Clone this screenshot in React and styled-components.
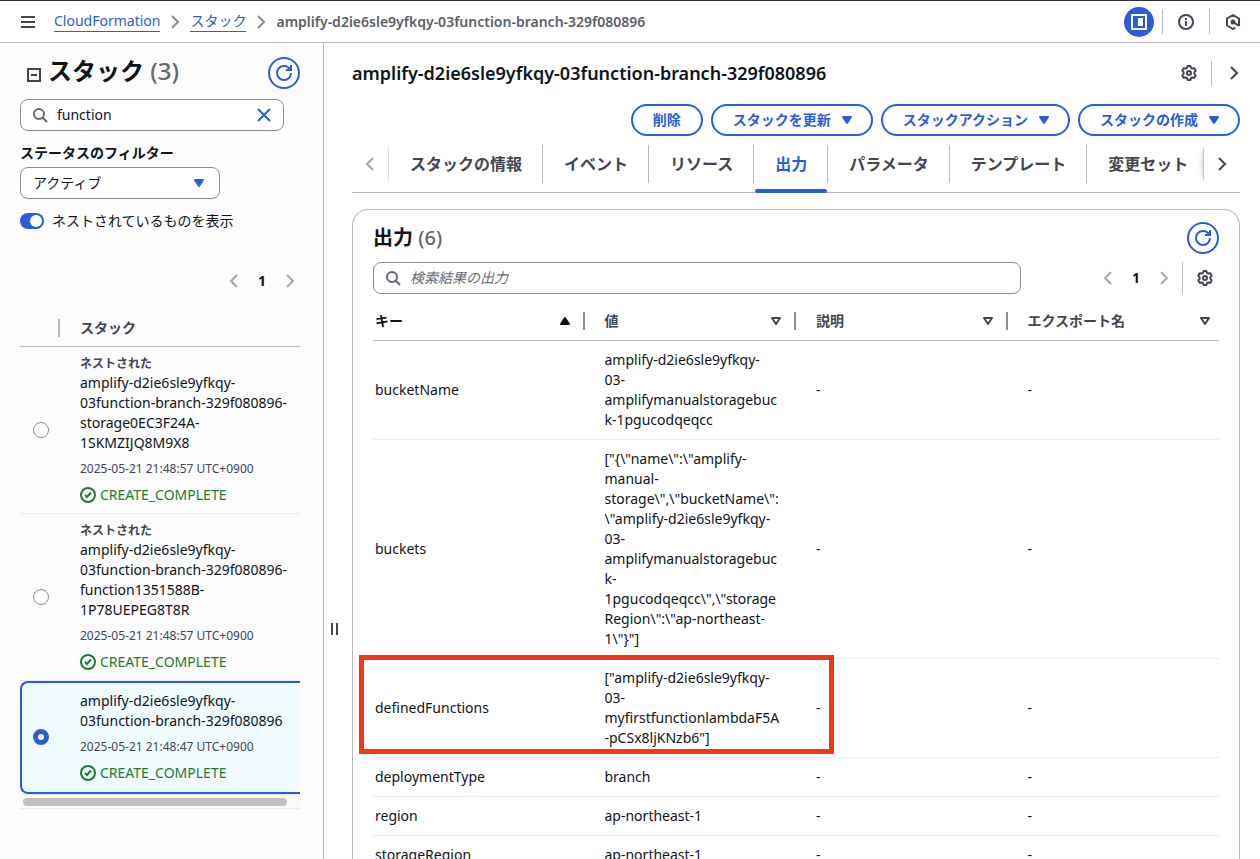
import React, { useState } from 'react';
import styled, { createGlobalStyle, css } from 'styled-components';

const GlobalStyle = createGlobalStyle`
    * {
        box-sizing: border-box;
    }

    html, body {
        height: 100%;
        margin: 0;
        overflow: hidden;
    }

    #root {
        height: 100%;
    }

    body, button, input, select {
        font-family: "Noto Sans", "Noto Sans CJK JP", sans-serif;
        font-size: 14px;
        line-height: 20px;
        color: #0f141a;
    }
`;

const Page = styled.div`
    display: flex;
    flex-direction: column;
    height: 100vh;
    background: #fff;
    border-top: 1px solid #2c2f3a;
`;

const TopBar = styled.header`
    display: flex;
    align-items: center;
    flex: none;
    height: 42px;
    padding: 0 19px 0 20px;
    border-bottom: 1px solid #b6b9c4;
`;

const IconButton = styled.button`
    display: inline-flex;
    align-items: center;
    justify-content: center;
    flex: none;
    width: 16px;
    height: 32px;
    padding: 0;
    border: 0;
    background: none;
    color: ${({ $muted }) => ($muted ? '#a4a7b2' : '#424650')};
    cursor: pointer;
`;

const Svg = styled.svg`
    display: block;
    flex: none;
    fill: none;
    stroke: currentColor;
    stroke-width: 2;
`;

const Breadcrumbs = styled.nav`
    display: flex;
    align-items: center;
    gap: 7px;
    flex: 1;
    margin-left: 18px;
    color: #8c8c94;
`;

const Crumb = styled.a`
    color: #2a5ddb;
    text-decoration: none;
    border-bottom: 1px solid #2a5ddb;
`;

const CurrentCrumb = styled.span`
    color: #5c5f69;
    font-weight: 600;
`;

const TopTools = styled.div`
    display: flex;
    align-items: center;
    gap: 15px;
`;

const Divider = styled.span`
    width: 1px;
    height: 25px;
    background: #b6b9c4;
`;

const PanelToggle = styled.button`
    display: flex;
    align-items: center;
    justify-content: center;
    width: 30px;
    height: 30px;
    margin-right: -7px;
    padding: 0;
    border: 0;
    border-radius: 50%;
    background: #2a5ddb;
    color: #fff;
`;

const Body = styled.div`
    display: flex;
    flex: 1;
    min-height: 0;
`;

const Sidebar = styled.aside`
    flex: none;
    width: 324px;
    padding: 14px 23px 0 20px;
    background: #fcfcfd;
    border-right: 1px solid #b6b9c4;
    overflow: hidden;
`;

const SideHeader = styled.div`
    display: flex;
    align-items: center;
    justify-content: space-between;
    height: 32px;
    padding-left: 7px;
`;

const SideTitle = styled.h2`
    display: flex;
    align-items: center;
    gap: 7px;
    margin: -4px 0 0;
    font-size: 24px;
    line-height: 30px;
    font-weight: 600;

    svg {
        margin-top: 8px;
        color: #424650;
    }
`;

const Count = styled.span`
    color: #656871;
    font-weight: 500;
`;

const RoundButton = styled.button`
    display: flex;
    align-items: center;
    justify-content: center;
    flex: none;
    width: 32px;
    height: 32px;
    padding: 0;
    border: 2px solid #2a5ddb;
    border-radius: 50%;
    background: #fff;
    color: #2a5ddb;
`;

const SearchBox = styled.label`
    display: flex;
    align-items: center;
    gap: 9px;
    height: 32px;
    padding: 0 11px;
    border: 1px solid #8c8c94;
    border-radius: 8px;
    background: #fff;
    color: #656871;

    input {
        flex: 1;
        min-width: 0;
        padding: 0;
        border: 0;
        outline: 0;
        background: none;
    }

    input::placeholder {
        color: #656871;
        font-style: italic;
        opacity: 1;
    }
`;

const SideSearch = styled(SearchBox)`
    margin: 10px 16px 0 0;
`;

const ClearButton = styled(IconButton)`
    color: #2a5ddb;
`;

const FieldLabel = styled.label`
    display: block;
    margin: 12px 0 4px;
    font-size: 14px;
    font-weight: 600;
`;

const SelectWrap = styled.div`
    display: grid;
    align-items: center;
    width: 200px;

    > * {
        grid-area: 1 / 1;
    }

    svg {
        justify-self: end;
        margin-right: 15px;
        color: #2a5ddb;
        pointer-events: none;
    }
`;

const Select = styled.select`
    width: 100%;
    height: 32px;
    padding: 0 12px;
    border: 1px solid #8c8c94;
    border-radius: 8px;
    background: #fff;
    appearance: none;
`;

const ToggleLabel = styled.label`
    display: flex;
    align-items: center;
    gap: 8px;
    margin-top: 12px;
`;

const Toggle = styled.input`
    display: flex;
    align-items: center;
    width: 24px;
    height: 16px;
    margin: 0;
    padding: 0 2px;
    border-radius: 8px;
    background: ${({ checked }) => (checked ? '#2a5ddb' : '#424650')};
    appearance: none;

    &::before {
        content: "";
        width: 12px;
        height: 12px;
        margin-left: ${({ checked }) => (checked ? 'auto' : 0)};
        border-radius: 50%;
        background: #fff;
    }
`;

const Pager = styled.div`
    display: flex;
    align-items: center;
    gap: 16px;
    font-weight: 700;
`;

const SidePager = styled(Pager)`
    justify-content: flex-end;
    margin: 34px 2px 15px 0;
`;

const StackTable = styled.table`
    width: 100%;
    border-collapse: separate;
    border-spacing: 0;

    th {
        height: 35px;
        padding: 0 0 3px;
        text-align: left;
        border-bottom: 1px solid #b6b9c4;
        color: #424650;
        font-weight: 600;
    }

    th:first-child > span {
        display: block;
        width: 2px;
        height: 18px;
        margin-left: 38px;
        background: #b6b9c4;
    }
`;

const StackCell = styled.td`
    padding: ${({ $selected }) => ($selected ? '8px 0 9px' : '8px 0')};
    border-bottom: 1px solid #ebebf0;
    word-break: break-word;

    &:first-child {
        width: 60px;
        padding-left: 13px;
    }

    ${({ $selected }) => $selected && css`
        background: #f0fbff;
        border-top: 2px solid #2a5ddb;
        border-bottom: 2px solid #2a5ddb;

        &:first-child {
            padding-left: 11px;
            border-left: 2px solid #2a5ddb;
            border-radius: 8px 0 0 8px;
        }
    `}
`;

const Radio = styled.input`
    display: block;
    width: 16px;
    height: 16px;
    margin: 0;
    border: ${({ checked }) => (checked ? '5px solid #2a5ddb' : '1px solid #8c8c94')};
    border-radius: 50%;
    background: #fff;
    appearance: none;
`;

const Nested = styled.div`
    color: #424650;
    font-size: 12px;
    line-height: 18px;
    font-weight: 600;
`;

const StackName = styled.div`
    white-space: pre;
`;

const StackTime = styled.div`
    margin-top: 7px;
    color: #424650;
    font-size: 12px;
    line-height: 18px;
`;

const Status = styled.div`
    display: flex;
    align-items: center;
    gap: 4px;
    margin-top: 7px;
    color: #1f7a2e;
`;

const ScrollTrack = styled.div`
    height: 15px;
    padding: 3px 13px 0 3px;
    border-top: 1px solid #ebebeb;
    border-bottom: 1px solid #ebebeb;
    background: #fafafa;
`;

const ScrollThumb = styled.div`
    height: 8px;
    border-radius: 4px;
    background: #c1c1c1;
`;

const Splitter = styled.div`
    display: flex;
    align-items: center;
    justify-content: center;
    gap: 3px;
    flex: none;
    width: 28px;
    padding: 0 7px 0 0;

    &::before, &::after {
        content: "";
        width: 2px;
        height: 12px;
        margin-top: 356px;
        background: #424650;
    }
`;

const Main = styled.main`
    display: flex;
    flex-direction: column;
    flex: 1;
    min-width: 0;
    padding: 14px 20px 0 0;
`;

const MainHeader = styled.div`
    display: flex;
    align-items: center;
    justify-content: space-between;
    flex: none;
    height: 32px;
`;

const MainTitle = styled.h1`
    margin: 0;
    font-size: 18px;
    line-height: 22px;
    font-weight: 600;
`;

const HeaderTools = styled.div`
    display: flex;
    align-items: center;
    gap: 14px;

    ${IconButton}:last-child {
        margin-right: -2px;
    }
`;

const Actions = styled.div`
    display: flex;
    justify-content: flex-end;
    flex: none;
    gap: 8px;
    margin-top: 15px;
`;

const ActionButton = styled.button`
    display: flex;
    align-items: center;
    gap: 10px;
    height: 32px;
    padding: 0 20px;
    border: 2px solid #2a5ddb;
    border-radius: 20px;
    background: #fff;
    color: #2a5ddb;
    font-weight: 600;
    white-space: nowrap;

    svg {
        margin-right: -2px;
    }
`;

const TabBar = styled.div`
    display: flex;
    align-items: center;
    flex: none;
    height: 57px;
    border-bottom: 1px solid #b6b9c4;
`;

const TabArrow = styled(IconButton)`
    width: 37px;
    border-right: ${({ $left }) => ($left ? '1px solid #dedee3' : 0)};
    border-left: ${({ $left }) => ($left ? 0 : '1px solid #c6c6cd')};
    box-shadow: ${({ $left }) => ($left ? 'none' : '-4px 0 4px -3px rgba(0, 7, 22, 0.2)')};
`;

const Tabs = styled.div`
    display: flex;
    align-items: stretch;
    flex: 1;
    height: 57px;
    overflow: hidden;
`;

const Tab = styled.button`
    display: grid;
    grid-template-rows: 9px 38px 10px;
    flex: none;
    padding: 0;
    border: 0;
    background: none;
    color: ${({ $active }) => ($active ? '#2a5ddb' : '#424650')};
    font-size: 16px;
    font-weight: 600;

    span {
        grid-row: 2;
        padding: 9px 20px 9px 21px;
        border-right: ${({ $last }) => ($last ? 0 : '1px solid #b6b9c4')};
    }

    &::after {
        content: "";
        grid-row: 3;
        align-self: end;
        height: 4px;
        margin: 0 1px;
        border-radius: 2px;
        background: ${({ $active }) => ($active ? '#2a5ddb' : 'transparent')};
    }
`;

const Card = styled.section`
    flex: 1;
    min-height: 0;
    margin-top: 16px;
    padding: 12px 20px 0;
    border: 1px solid #b6b9c4;
    border-bottom: 0;
    border-radius: 16px 16px 0 0;
    overflow: hidden;
`;

const CardHeader = styled.div`
    display: flex;
    align-items: center;
    justify-content: space-between;
`;

const CardTitle = styled.h2`
    margin: 0;
    font-size: 20px;
    line-height: 24px;
    font-weight: 600;
`;

const CardTools = styled.div`
    display: flex;
    align-items: center;
    justify-content: space-between;
    margin-top: 8px;
`;

const OutputSearch = styled(SearchBox)`
    flex: 0 1 648px;
`;

const PagerGroup = styled.div`
    display: flex;
    align-items: center;
    padding-right: 6px;
`;

const PagerDivider = styled(Divider)`
    height: 32px;
    margin: 0 14px 0 10px;
`;

const OutputTable = styled.table`
    width: 100%;
    table-layout: fixed;
    border-collapse: separate;
    border-spacing: 0;

    th {
        height: 47px;
        padding: 8px 0 0;
        border-bottom: 1px solid #b6b9c4;
        font-weight: 600;
        text-align: left;
    }

    td {
        padding: 9px 0 9px 20px;
        border-bottom: 1px solid #ebebf0;
        vertical-align: middle;
        white-space: pre-line;
    }

    td:first-child {
        padding-left: 2px;
    }
`;

const HeadCell = styled.div`
    display: flex;
    align-items: center;
    justify-content: space-between;
    height: 18px;
    padding: 0 ${({ $last }) => ($last ? 8 : 12)}px 0 ${({ $first }) => ($first ? 2 : 20)}px;
    border-right: ${({ $last }) => ($last ? 0 : '2px solid #8c8c94')};
    color: ${({ $first }) => ($first ? '#0f141a' : '#424650')};
`;

const OutputRow = styled.tr`
    position: relative;
`;

const Highlight = styled.span`
    position: absolute;
    left: -14px;
    top: -4px;
    width: 475px;
    height: 99px;
    border: 5px solid #ee3a1b;
    pointer-events: none;
`;

function Chevron({ left }) {
    return (
        <Svg width="16" height="16" viewBox="0 0 16 16">
            <path d={left ? 'M11 2 5 8l6 6' : 'm5 2 6 6-6 6'} />
        </Svg>
    );
}

function SearchIcon() {
    return (
        <Svg width="16" height="16" viewBox="0 0 16 16">
            <circle cx="7" cy="7" r="5" />
            <path d="m15 15-4.5-4.5" />
        </Svg>
    );
}

function RefreshIcon() {
    return (
        <Svg width="16" height="16" viewBox="0 0 16 16">
            <path d="M10 5h5V0" />
            <path d="M15 8a6.957 6.957 0 0 1-7 7 6.957 6.957 0 0 1-7-7 6.957 6.957 0 0 1 7-7 6.87 6.87 0 0 1 6.3 4" />
        </Svg>
    );
}

function GearIcon() {
    return (
        <Svg width="16" height="16" viewBox="0 0 16 16" strokeLinejoin="round">
            <path d="M6.6 1h2.8l.6 1.9 1.3.7 2-.4 1.4 2.4-1.3 1.5v1.8l1.3 1.5-1.4 2.4-2-.4-1.3.7-.6 1.9H6.6L6 13.1l-1.3-.7-2 .4-1.4-2.4 1.3-1.5V7.1L1.3 5.6l1.4-2.4 2 .4L6 2.9z" />
            <circle cx="8" cy="8" r="2" />
        </Svg>
    );
}

function Caret({ up, open }) {
    return (
        <Svg width="12" height="10" viewBox="0 0 12 10" strokeLinejoin="round">
            <path
                d={up ? 'M2 8h8L6 2z' : 'M2 2h8L6 8z'}
                fill={open ? 'none' : 'currentColor'}
            />
        </Svg>
    );
}

function CheckIcon() {
    return (
        <Svg width="16" height="16" viewBox="0 0 16 16">
            <circle cx="8" cy="8" r="7" />
            <path d="m5 8 2 2 4-4.5" />
        </Svg>
    );
}

function PageButtons() {
    return (
        <>
            <IconButton $muted aria-label="前へ"><Chevron left /></IconButton>
            <span>1</span>
            <IconButton $muted aria-label="次へ"><Chevron /></IconButton>
        </>
    );
}

const stacks = [
    {
        id: 'storage',
        nested: true,
        name: 'amplify-d2ie6sle9yfkqy-\n03function-branch-329f080896-\nstorage0EC3F24A-\n1SKMZIJQ8M9X8',
        time: '2025-05-21 21:48:57 UTC+0900',
    },
    {
        id: 'function',
        nested: true,
        name: 'amplify-d2ie6sle9yfkqy-\n03function-branch-329f080896-\nfunction1351588B-\n1P78UEPEG8T8R',
        time: '2025-05-21 21:48:57 UTC+0900',
    },
    {
        id: 'root',
        name: 'amplify-d2ie6sle9yfkqy-\n03function-branch-329f080896',
        time: '2025-05-21 21:48:47 UTC+0900',
    },
];

const tabs = ['スタックの情報', 'イベント', 'リソース', '出力', 'パラメータ', 'テンプレート', '変更セット'];

const columns = ['キー', '値', '説明', 'エクスポート名'];

const outputs = [
    ['bucketName', 'amplify-d2ie6sle9yfkqy-\n03-\namplifymanualstoragebuc\nk-1pgucodqeqcc'],
    ['buckets', '["{\\"name\\":\\"amplify-\nmanual-\nstorage\\",\\"bucketName\\":\n\\"amplify-d2ie6sle9yfkqy-\n03-\namplifymanualstoragebuc\nk-\n1pgucodqeqcc\\",\\"storage\nRegion\\":\\"ap-northeast-\n1\\"}"]'],
    ['definedFunctions', '["amplify-d2ie6sle9yfkqy-\n03-\nmyfirstfunctionlambdaF5A\n-pCSx8ljKNzb6"]'],
    ['deploymentType', 'branch'],
    ['region', 'ap-northeast-1'],
    ['storageRegion', 'ap-northeast-1'],
];

function StackList() {
    const [query, setQuery] = useState('function');
    const [nested, setNested] = useState(true);
    const [selected, setSelected] = useState('root');

    return (
        <Sidebar>
            <SideHeader>
                <SideTitle>
                    <Svg width="14" height="14" viewBox="0 0 14 14">
                        <path d="M1 1h12v12H1zM4 7h6" />
                    </Svg>
                    <span>スタック <Count>(3)</Count></span>
                </SideTitle>
                <RoundButton aria-label="更新"><RefreshIcon /></RoundButton>
            </SideHeader>
            <SideSearch>
                <SearchIcon />
                <input aria-label="検索" value={query} onChange={(e) => setQuery(e.target.value)} />
                <ClearButton aria-label="クリア" onClick={() => setQuery('')}>
                    <Svg width="16" height="16" viewBox="0 0 16 16">
                        <path d="m2 2 12 12M14 2 2 14" />
                    </Svg>
                </ClearButton>
            </SideSearch>
            <FieldLabel htmlFor="status">ステータスのフィルター</FieldLabel>
            <SelectWrap>
                <Select id="status">
                    <option>アクティブ</option>
                </Select>
                <Caret />
            </SelectWrap>
            <ToggleLabel>
                <Toggle type="checkbox" role="switch" checked={nested} onChange={() => setNested(!nested)} />
                ネストされているものを表示
            </ToggleLabel>
            <SidePager><PageButtons /></SidePager>
            <StackTable>
                <thead>
                    <tr>
                        <th><span /></th>
                        <th>スタック</th>
                    </tr>
                </thead>
                <tbody>
                    {stacks.map((stack) => (
                        <tr key={stack.id}>
                            <StackCell $selected={selected === stack.id}>
                                <Radio
                                    type="radio"
                                    name="stack"
                                    aria-label={stack.name}
                                    checked={selected === stack.id}
                                    onChange={() => setSelected(stack.id)}
                                />
                            </StackCell>
                            <StackCell $selected={selected === stack.id}>
                                {stack.nested && <Nested>ネストされた</Nested>}
                                <StackName>{stack.name}</StackName>
                                <StackTime>{stack.time}</StackTime>
                                <Status><CheckIcon />CREATE_COMPLETE</Status>
                            </StackCell>
                        </tr>
                    ))}
                </tbody>
            </StackTable>
            <ScrollTrack><ScrollThumb /></ScrollTrack>
        </Sidebar>
    );
}

function Outputs() {
    return (
        <Card>
            <CardHeader>
                <CardTitle>出力 <Count>(6)</Count></CardTitle>
                <RoundButton aria-label="更新"><RefreshIcon /></RoundButton>
            </CardHeader>
            <CardTools>
                <OutputSearch>
                    <SearchIcon />
                    <input aria-label="検索結果の出力" placeholder="検索結果の出力" />
                </OutputSearch>
                <PagerGroup>
                    <Pager><PageButtons /></Pager>
                    <PagerDivider />
                    <IconButton aria-label="設定"><GearIcon /></IconButton>
                </PagerGroup>
            </CardTools>
            <OutputTable>
                <thead>
                    <tr>
                        {columns.map((column, i) => (
                            <th key={column}>
                                <HeadCell $first={i === 0} $last={i === 3}>
                                    {column}
                                    <Caret up={i === 0} open={i > 0} />
                                </HeadCell>
                            </th>
                        ))}
                    </tr>
                </thead>
                <tbody>
                    {outputs.map(([key, value]) => (
                        <OutputRow key={key}>
                            <td>
                                {key}
                                {key === 'definedFunctions' && <Highlight />}
                            </td>
                            <td>{value}</td>
                            <td>-</td>
                            <td>-</td>
                        </OutputRow>
                    ))}
                </tbody>
            </OutputTable>
        </Card>
    );
}

function App() {
    const [tab, setTab] = useState('出力');

    return (
        <Page>
            <GlobalStyle />
            <TopBar>
                <IconButton aria-label="メニュー">
                    <Svg width="16" height="16" viewBox="0 0 16 16">
                        <path d="M1 3h14M1 8h14M1 13h14" />
                    </Svg>
                </IconButton>
                <Breadcrumbs>
                    <Crumb href="#cloudformation">CloudFormation</Crumb>
                    <Chevron />
                    <Crumb href="#stacks">スタック</Crumb>
                    <Chevron />
                    <CurrentCrumb>amplify-d2ie6sle9yfkqy-03function-branch-329f080896</CurrentCrumb>
                </Breadcrumbs>
                <TopTools>
                    <PanelToggle aria-label="サイドパネル">
                        <Svg width="16" height="16" viewBox="0 0 16 16">
                            <path d="M1 1h14v14H1z" />
                            <path d="M8 5h3v6H8z" fill="currentColor" />
                        </Svg>
                    </PanelToggle>
                    <Divider />
                    <IconButton aria-label="情報">
                        <Svg width="16" height="16" viewBox="0 0 16 16">
                            <circle cx="8" cy="8" r="7" />
                            <path d="M8 12V7M8 6V4" />
                        </Svg>
                    </IconButton>
                    <Divider />
                    <IconButton aria-label="アシスタント">
                        <Svg width="16" height="16" viewBox="0 0 16 16" strokeLinejoin="round">
                            <path d="M14 12V4.5L8 1 2 4.5v7L8 15l2.5-1.5" />
                            <circle cx="8" cy="8" r="1.5" fill="currentColor" />
                            <path d="m8 8 6 4" />
                        </Svg>
                    </IconButton>
                </TopTools>
            </TopBar>
            <Body>
                <StackList />
                <Splitter />
                <Main>
                    <MainHeader>
                        <MainTitle>amplify-d2ie6sle9yfkqy-03function-branch-329f080896</MainTitle>
                        <HeaderTools>
                            <IconButton aria-label="設定"><GearIcon /></IconButton>
                            <Divider />
                            <IconButton aria-label="開く"><Chevron /></IconButton>
                        </HeaderTools>
                    </MainHeader>
                    <Actions>
                        <ActionButton>削除</ActionButton>
                        <ActionButton>スタックを更新<Caret /></ActionButton>
                        <ActionButton>スタックアクション<Caret /></ActionButton>
                        <ActionButton>スタックの作成<Caret /></ActionButton>
                    </Actions>
                    <TabBar>
                        <TabArrow $left $muted aria-label="前のタブ"><Chevron left /></TabArrow>
                        <Tabs role="tablist">
                            {tabs.map((name, i) => (
                                <Tab
                                    key={name}
                                    role="tab"
                                    aria-selected={tab === name}
                                    $active={tab === name}
                                    $last={i === tabs.length - 1}
                                    onClick={() => setTab(name)}
                                >
                                    <span>{name}</span>
                                </Tab>
                            ))}
                        </Tabs>
                        <TabArrow aria-label="次のタブ"><Chevron /></TabArrow>
                    </TabBar>
                    <Outputs />
                </Main>
            </Body>
        </Page>
    );
}

export default App;
